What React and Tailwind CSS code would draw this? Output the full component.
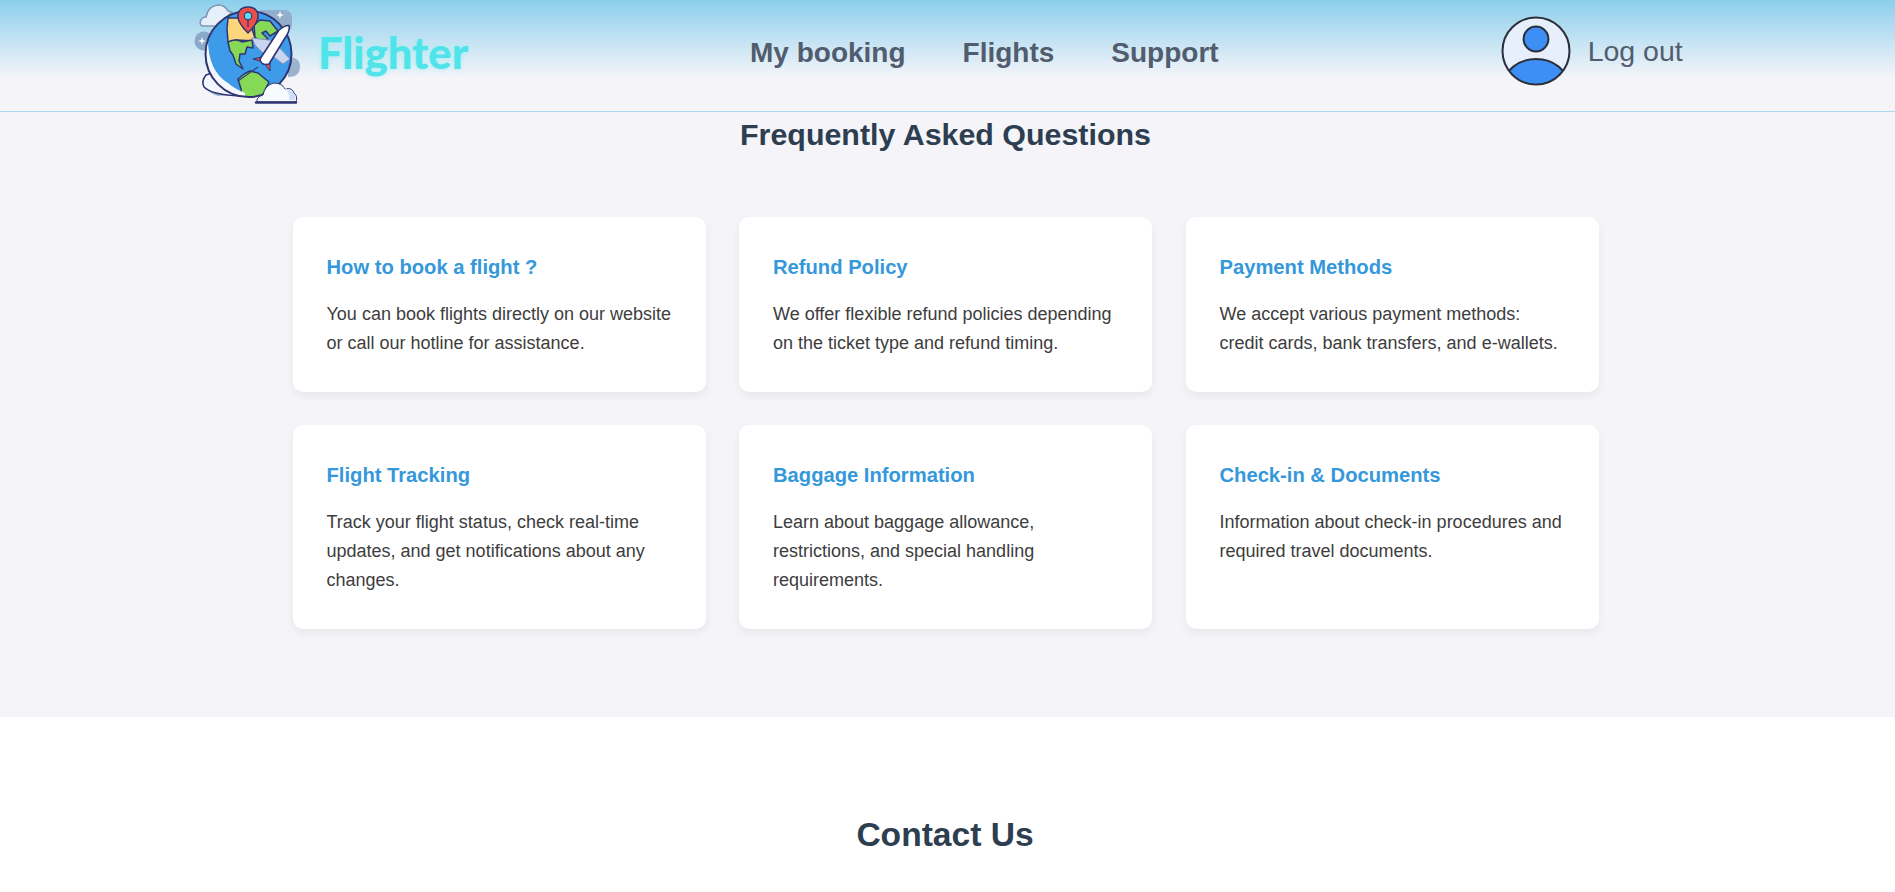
import React from "react";

function Logo() {
  const ink = "#2f3570";
  return (
    <svg width="120" height="110" viewBox="0 0 120 110" className="shrink-0">
      <defs>
        <clipPath id="globe"><circle cx="58.5" cy="53" r="43" /></clipPath>
      </defs>
      {/* backdrop blobs */}
      <path d="M70 9 H94 Q102 9 102 17 V24 Q102 30 96 30 L80 30 Z" fill="#93aecd" />
      <circle cx="14" cy="40" r="9.5" fill="#8aa9c8" />
      <path d="M98 56 Q110 56 110 66 Q110 76 98 76 Z" fill="#9ab3cf" />
      <path d="M20 78 L40 94 L28 95 Q16 92 18 82 Z" fill="#a4b9d3" />
      {/* back cloud */}
      <path d="M14 25 Q9 25 10.5 20 Q12 16 16 16 Q18 5 28 4 Q35 4 38 10 L42 11 L27 25 Z" fill="#e6f0fa" stroke="#8198b4" strokeWidth="1.6" strokeLinejoin="round" />
      {/* orbit tail */}
      <path d="M16 74 Q11 80 14 86 Q22 94 50 95 L52 90 Q30 88 22 72 Z" fill="#f4f7fd" stroke={ink} strokeWidth="1.6" strokeLinejoin="round" />
      {/* globe */}
      <circle cx="58.5" cy="53" r="43" fill="#3d9bea" />
      <g clipPath="url(#globe)">
        <path d="M38 17 L52 17 L62 28 L66 40 L46 39 L38 41 L37 28 Z" fill="#fcd67c" stroke={ink} strokeWidth="1.5" strokeLinejoin="round" />
        <path d="M38 41 Q46 37 52 41 L62 39 L63 47 L57 46 L55 53 L50 53 L49 60 L53 68 L46 63 L43 54 L40 50 Z" fill="#86d957" stroke={ink} strokeWidth="1.5" strokeLinejoin="round" />
        <path d="M64 24 L70 19 L80 20 L88 30 L80 35 L76 30 L72 32 L78 38 L70 42 L65 36 Z" fill="#86d957" stroke={ink} strokeWidth="1.5" strokeLinejoin="round" />
        <path d="M48 78 L54 73 L60 70 L68 72 L74 77 L79 81 L72 95 L66 100 L52 100 L51 88 Z" fill="#86d957" stroke={ink} strokeWidth="1.5" strokeLinejoin="round" />
        <path d="M18 38 Q18 70 38 82 Q45 88 55 92 L55 100 L5 100 L5 38 Z" fill="#f4f7fd" />
      </g>
      <path d="M48 80 L68 66" stroke={ink} strokeWidth="1.1" />
      <circle cx="58.5" cy="53" r="43" fill="none" stroke={ink} strokeWidth="2" />
      {/* pin */}
      <path d="M58 32 Q47 21 48 14 Q49 6 58 6 Q67 6 68 14 Q69 21 58 32 Z" fill="#ee4f4b" stroke={ink} strokeWidth="1.5" strokeLinejoin="round" />
      <circle cx="58" cy="15" r="3.8" fill="#5fdcef" stroke={ink} strokeWidth="1.2" />
      <path d="M58 19 V26" stroke={ink} strokeWidth="1.3" />
      {/* plane */}
      <path d="M87 40 L62 37 L65 44 L73 52 Z" fill="#c9d6f0" stroke="#7f93bd" strokeWidth="1" strokeLinejoin="round" />
      <path d="M86 43 L100 58 L93 63 L80 53 Z" fill="#c9d6f0" stroke="#7f93bd" strokeWidth="1" strokeLinejoin="round" />
      <path d="M63 58 L72 56 L73 61 Z" fill="#e9514f" stroke={ink} strokeWidth="1" strokeLinejoin="round" />
      <path d="M74 62 L80 70 L80 60 Z" fill="#e9514f" stroke={ink} strokeWidth="1" strokeLinejoin="round" />
      <path d="M70 58 L89 29 Q95 24 99 24.5 Q100 28 97.5 33 L79 63 Q71 65 70 58 Z" fill="#ffffff" stroke={ink} strokeWidth="1.6" strokeLinejoin="round" />
      {/* front cloud */}
      <path d="M67 101 Q66 96 73 94 Q75 84 84 82 Q92 82 95 88 Q102 86 104 92 Q108 95 106 101 Z" fill="#f7faff" stroke={ink} strokeWidth="1" strokeLinejoin="round" />
      <path d="M93 86 Q100 90 99 99 L105 99 Q107 93 100 89 Z" fill="#cfe0f7" />
      <path d="M66 101.5 H106" stroke={ink} strokeWidth="2.4" strokeLinecap="round" />
      {/* sparkles */}
      <path d="M90 10 L91 13 L94 14 L91 15 L90 18 L89 15 L86 14 L89 13 Z" fill="#f4f8ff" />
      <path d="M12 36 L13 39 L16 40 L13 41 L12 44 L11 41 L8 40 L11 39 Z" fill="#f4f8ff" />
    </svg>
  );
}

function Avatar() {
  return (
    <svg width="70" height="70" viewBox="0 0 70 70" className="shrink-0">
      <defs>
        <clipPath id="av"><circle cx="35" cy="35" r="33.5" /></clipPath>
      </defs>
      <circle cx="35" cy="35" r="33.5" fill="#e8effc" />
      <g clipPath="url(#av)">
        <ellipse cx="35" cy="69" rx="32" ry="26" fill="#3d8ff5" stroke="#2b2f3a" strokeWidth="2" />
      </g>
      <circle cx="35" cy="23" r="12.4" fill="#3d8ff5" stroke="#2b2f3a" strokeWidth="2" />
      <circle cx="35" cy="35" r="33.5" fill="none" stroke="#2b2f3a" strokeWidth="2" />
    </svg>
  );
}

const faqs = [
  ["How to book a flight ?", "You can book flights directly on our website or call our hotline for assistance."],
  ["Refund Policy", "We offer flexible refund policies depending on the ticket type and refund timing."],
  ["Payment Methods", "We accept various payment methods: credit cards, bank transfers, and e-wallets."],
  ["Flight Tracking", "Track your flight status, check real-time updates, and get notifications about any changes."],
  ["Baggage Information", "Learn about baggage allowance, restrictions, and special handling requirements."],
  ["Check-in & Documents", "Information about check-in procedures and required travel documents."],
];

export default function App() {
  return (
    <div className="bg-white h-[892px] overflow-hidden font-['Liberation_Sans',Arial,sans-serif]">
      <header className="h-[112px] border-b border-[#a9d6ee] bg-gradient-to-b from-[#8bcfec] to-[#f4f4f9] to-70% flex items-center pl-[190px] bg-[#f4f4f9]">
        <div className="w-[560px] flex items-center">
          <Logo />
          <span className="ml-[8px] mb-[5px] text-[43.5px] leading-none font-black text-[#4fe3ea] [text-shadow:0_0_5px_#a5eef2] font-['Lato',sans-serif]">
            Flighter
          </span>
        </div>
        <nav className="flex gap-[57px] text-[28px] leading-none font-bold text-[#515c6e] mb-[5px]">
          <span>My booking</span>
          <span>Flights</span>
          <span>Support</span>
        </nav>
        <div className="ml-[282px] mb-[10px] flex items-center gap-[17px]">
          <Avatar />
          <span className="mt-[2px] text-[28.5px] leading-none text-[#525d70]">Log out</span>
        </div>
      </header>

      <main className="bg-[#f4f4f9] h-[605px] pr-[4px] flex flex-col items-center shadow-[0_2px_4px_rgba(244,244,249,0.7)]">
        <h2 className="mt-[4px] text-[30.4px] leading-[36px] font-bold text-[#2c3e50]">Frequently Asked Questions</h2>
        <div className="mt-[65px] w-[1306px] grid grid-cols-3 gap-x-[33.5px] gap-y-[33px]">
          {faqs.map(([title, body]) => (
            <article key={title} className="bg-white rounded-[10px] shadow-[0_4px_8px_rgba(0,0,0,0.06)] pl-[34px] pr-[30px] pt-[38px] pb-[34px]">
              <h3 className="text-[20.2px] leading-[24px] font-bold text-[#3498db]">{title}</h3>
              <p className="mt-[21px] text-[18px] leading-[29px] text-[#3d3d3d]">{body}</p>
            </article>
          ))}
        </div>
      </main>

      <section className="bg-white pr-[5px] flex justify-center">
        <h2 className="mt-[97px] text-[33.6px] leading-[42px] font-bold text-[#2c3e50]">Contact Us</h2>
      </section>
    </div>
  );
}
